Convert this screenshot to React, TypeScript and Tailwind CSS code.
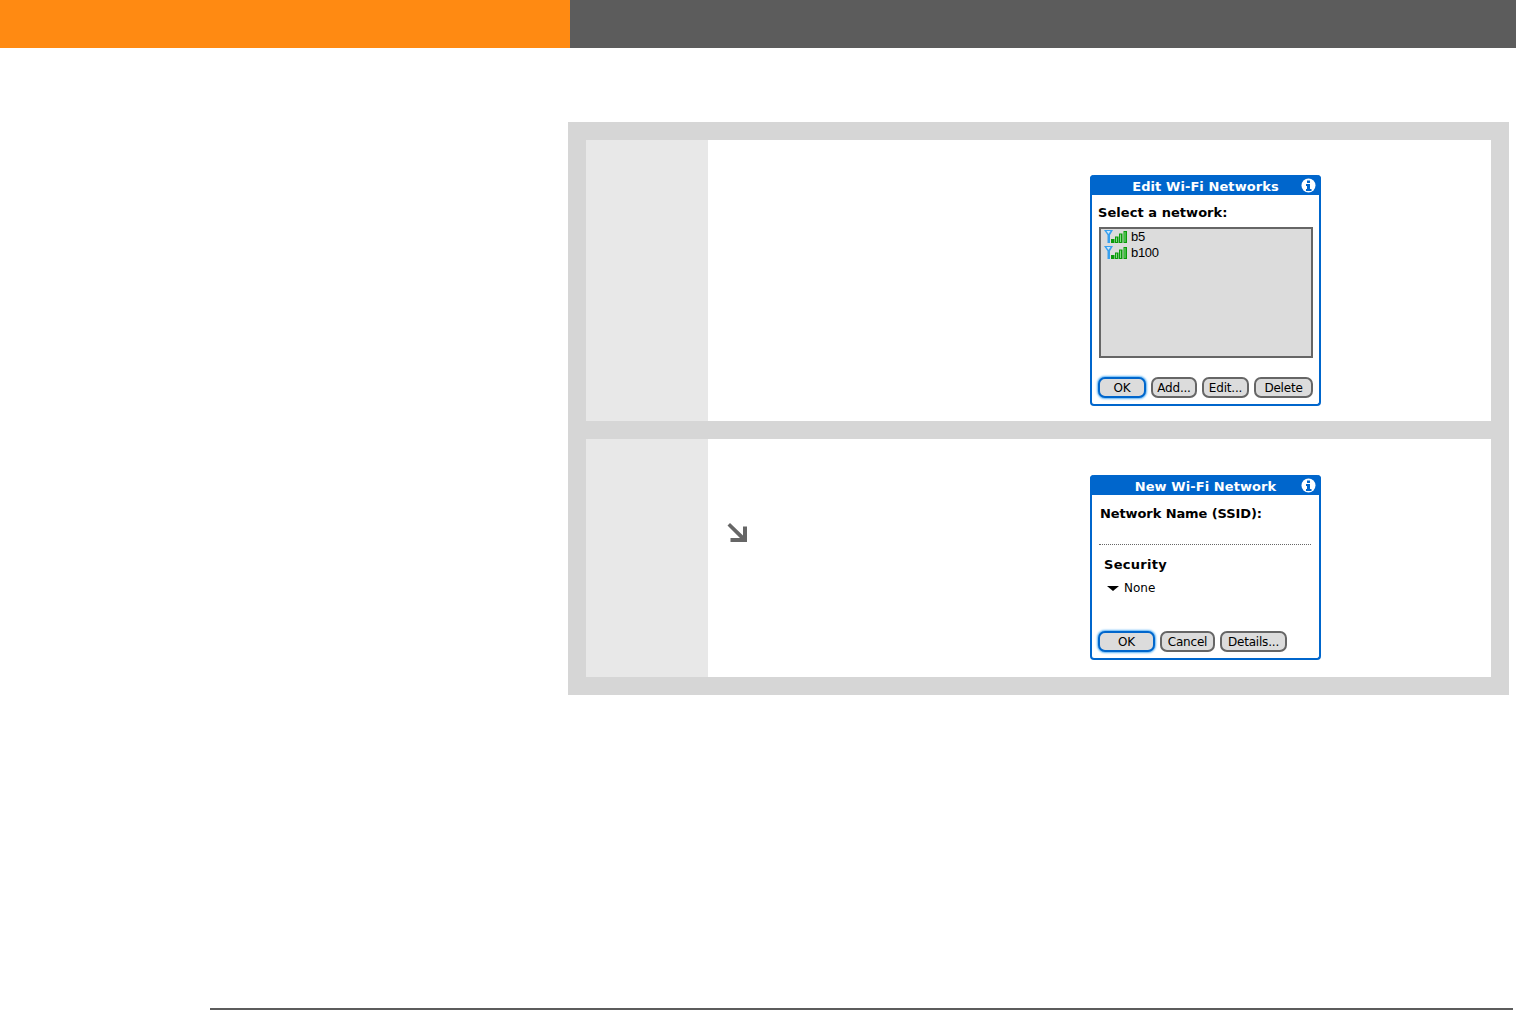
import React from "react";

const palmFont = "font-['DejaVu_Sans',sans-serif]";

const InfoIcon = () => (
  <svg width="15" height="15" viewBox="0 0 15 15">
    <circle cx="7.5" cy="7.5" r="7" fill="#fff" />
    <rect x="6" y="2.5" width="3" height="2.5" fill="#0066cc" />
    <path d="M5 6h4v5h1.5v2h-5.500v-2H6V8H5z" fill="#0066cc" />
  </svg>
);

const SignalIcon = () => (
  <svg width="24" height="15" viewBox="0 0 24 15" className="shrink-0 -mt-[1px]">
    <path d="M0 1h9L6 6v8H3.500V6z" fill="#38a0ee" />
    <path d="M2.500 2h4L4.500 5z" fill="#cfe9fb" />
    <rect x="7" y="10" width="3.500" height="4" fill="#0a9a0a" />
    <rect x="11" y="7.500" width="3.500" height="6.500" fill="#0a9a0a" />
    <rect x="15" y="4.500" width="3.500" height="9.500" fill="#0a9a0a" />
    <rect x="19.500" y="2" width="3.500" height="12" fill="#0a9a0a" />
    <rect x="12" y="8.500" width="1" height="4.500" fill="#7fe07f" />
    <rect x="16" y="5.500" width="1" height="7.500" fill="#7fe07f" />
    <rect x="20.500" y="3" width="1" height="10" fill="#7fe07f" />
  </svg>
);

const HintArrow = () => (
  <svg width="24" height="24" viewBox="0 0 24 24">
    <path d="M2.500 4.500 5 2l13 12.500V5.500h4V21H5.500v-4H15z" fill="#666" />
  </svg>
);

const PalmButton = ({
  label,
  width,
  active,
}: {
  label: string;
  width: string;
  active?: boolean;
}) => (
  <div
    className={`${width} h-[21px] flex items-center justify-center rounded-[7px] bg-[#dcdcdc] text-[12px] leading-none tracking-[-0.2px] text-black ${
      active
        ? "border-2 border-[#0066cc] shadow-[0_0_2px_1px_#5db4f5]"
        : "border-2 border-[#666]"
    }`}
  >
    {label}
  </div>
);

const Dialog = ({
  title,
  children,
}: {
  title: string;
  children: React.ReactNode;
}) => (
  <div
    className={`w-[231px] h-full flex flex-col border-2 border-t-0 border-[#0066cc] rounded-[4px] bg-white ${palmFont}`}
  >
    <div className="-mx-[2px] h-[20px] shrink-0 relative flex items-center justify-center pt-[3px] bg-[#0066cc] rounded-t-[4px] text-[13px] font-bold tracking-[0.08px] text-white">
      {title}
      <span className="absolute right-[5px] top-[3px] flex">
        <InfoIcon />
      </span>
    </div>
    {children}
  </div>
);

const EditNetworks = () => (
  <Dialog title="Edit Wi-Fi Networks">
    <div className="pl-[6px] pt-[10px] text-[13px] leading-[16px] font-bold tracking-[0.05px] text-black">
      Select a network:
    </div>
    <div className="ml-[7px] mt-[6px] w-[214px] h-[131px] border-2 border-[#666] bg-[#dcdcdc] pl-[3px] font-['Liberation_Sans',sans-serif] text-[13px] leading-[16px] tracking-[-0.3px] text-black">
      <div className="flex items-center gap-[3px]">
        <SignalIcon />
        b5
      </div>
      <div className="flex items-center gap-[3px]">
        <SignalIcon />
        b100
      </div>
    </div>
    <div className="ml-[6px] mt-[19px] flex gap-[5px]">
      <PalmButton label="OK" width="w-[48px]" active />
      <PalmButton label="Add..." width="w-[46px]" />
      <PalmButton label="Edit..." width="w-[47px]" />
      <PalmButton label="Delete" width="w-[59px]" />
    </div>
  </Dialog>
);

const NewNetwork = () => (
  <Dialog title="New Wi-Fi Network">
    <div className="pl-[8px] pt-[11px] text-[13px] leading-[16px] font-bold tracking-[-0.1px] text-black">
      Network Name (SSID):
    </div>
    <div className="ml-[7px] mt-[22px] w-[212px] border-t border-dotted border-[#666]" />
    <div className="pl-[12px] pt-[12px] text-[13px] leading-[16px] font-bold tracking-[0.3px] text-black">
      Security
    </div>
    <div className="pl-[15px] pt-[7px] flex items-center gap-[5px] text-[12px] leading-[16px] text-black">
      <span className="w-0 h-0 border-x-[6px] border-x-transparent border-t-[5px] border-t-black" />
      None
    </div>
    <div className="ml-[6px] mt-[35px] flex gap-[5px]">
      <PalmButton label="OK" width="w-[57px]" active />
      <PalmButton label="Cancel" width="w-[55px]" />
      <PalmButton label="Details..." width="w-[67px]" />
    </div>
  </Dialog>
);

const StepRow = ({
  height,
  hint,
  children,
}: {
  height: string;
  hint?: boolean;
  children: React.ReactNode;
}) => (
  <div className={`${height} flex bg-white`}>
    <div className="w-[122px] shrink-0 bg-[#e8e8e8]" />
    <div className="flex-1 flex pt-[35px]">
      <div className="w-[382px] shrink-0 pl-[17px] pt-[47px]">
        {hint && <HintArrow />}
      </div>
      <div className="h-fit">{children}</div>
    </div>
  </div>
);

export default function App() {
  return (
    <div className="w-[1516px] h-[1010px] overflow-hidden bg-white">
      <div className="flex h-[48px]">
        <div className="w-[570px] bg-[#ff8a12]" />
        <div className="flex-1 bg-[#5c5c5c]" />
      </div>

      <div className="ml-[568px] mt-[74px] w-[941px] flex flex-col gap-[18px] bg-[#d6d6d6] p-[18px]">
        <StepRow height="h-[281px]">
          <div className="h-[231px]">
            <EditNetworks />
          </div>
        </StepRow>
        <StepRow height="h-[238px]" hint>
          <div className="mt-[1px] h-[185px]">
            <NewNetwork />
          </div>
        </StepRow>
      </div>

      <div className="ml-[210px] mt-[313px] w-[1303px] h-[2px] bg-[#5c5c5c]" />
    </div>
  );
}
